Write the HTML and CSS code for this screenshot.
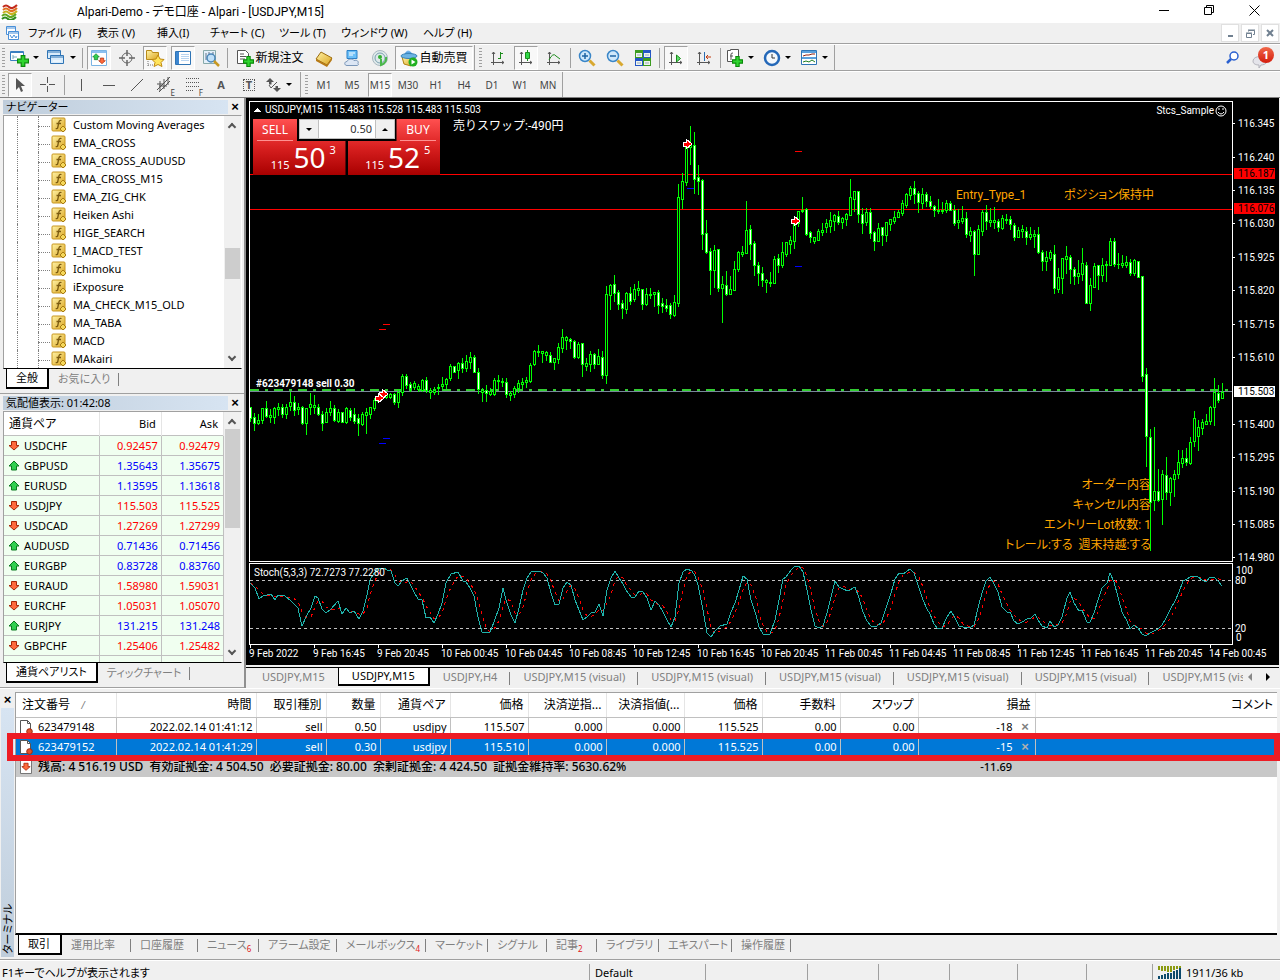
FILE: index.html
```html
<!doctype html>
<html lang="ja">
<head>
	<meta charset="UTF-8">
	<meta name="viewport" content="width=device-width, initial-scale=1">
	<title>Alpari-Demo</title>
	<link rel="stylesheet" href="styles.css">
</head>
<body>
	<svg class="defs" width="0" height="0">
		<defs>
			<linearGradient id="g_gold" x1="0" y1="0" x2="1" y2="1"><stop offset="0" stop-color="#fff3a8"/><stop offset="1" stop-color="#dba520"/></linearGradient>
			<linearGradient id="g_blue" x1="0" y1="0" x2="0" y2="1"><stop offset="0" stop-color="#8cc8f5"/><stop offset="1" stop-color="#1d6fc0"/></linearGradient>
		</defs>
		<symbol id="i_plus" viewBox="0 0 10 10"><path d="M3.500.5h3v3h3v3h-3v3h-3v-3h-3v-3h3z" fill="#2fd52f" stroke="#0a8a0a"/></symbol>
		<symbol id="i_fx" viewBox="0 0 16 16">
			<rect x="1" y="1" width="13" height="13" rx="1" fill="url(#g_gold)" stroke="#c8961e"/>
			<path d="M10.500 3.500c-2-.8-2.500.8-2.800 2.500l-.8 4c-.3 1.500-1 2-2.200 1.500M5.500 6.500h4.500" fill="none" stroke="#7a5a10" stroke-width="1.300"/>
			<path d="M12 9l3 3-3 3-3-3z" fill="#f5d75a" stroke="#a87c12"/>
		</symbol>
		<symbol id="i_up" viewBox="0 0 12 12"><path d="M6 1l5 5H8.500v4h-5V6H1z" fill="#30d050" stroke="#0b7a20"/></symbol>
		<symbol id="i_down" viewBox="0 0 12 12"><path d="M6 10L1 5.500h2.500v-4h5v4H11z" fill="#ff6a3c" stroke="#a82808"/></symbol>
		<symbol id="i_axes" viewBox="0 0 16 16"><path d="M3.500 2v13M1 12.500h13M2 4l1.500-2L5 4M12 11l2 1.500-2 1.500" fill="none" stroke="#555"/></symbol>
		<symbol id="i_order" viewBox="0 0 14 15">
			<path d="M1.500.5h7l3 3v10h-10z" fill="#fff" stroke="#555"/><path d="M8.500.5v3h3" fill="none" stroke="#555"/>
			<circle cx="10.500" cy="11.500" r="2.800" fill="#e2502a" stroke="#9c2a0c"/>
		</symbol>
	</svg>

	<header class="titlebar">
		<svg class="logo" width="18" height="17" fill="none" stroke-width="2">
			<path d="M2 4q3-3 6 0t8-2" stroke="#c22a1c"/><path d="M2 7q3-3 6 0t8-2" stroke="#e07020"/>
			<path d="M2 10q3-3 6 0t8-2" stroke="#c8b020"/><path d="M1 13q3-3 6 0t8-2" stroke="#62a822"/><path d="M1 16q3-3 6 0t8-2" stroke="#2f8a1c"/>
		</svg>
		<h1>Alpari-Demo - デモ口座 - Alpari - [USDJPY,M15]</h1>
		<div class="win-btns">
			<button type="button" aria-label="最小化"><svg width="11" height="11" stroke="#000"><path d="M0 5.500h10"/></svg></button>
			<button type="button" aria-label="元に戻す"><svg width="11" height="11" fill="none" stroke="#000"><path d="M.5 2.500h7v7h-7zM2.500 2.500v-2h7v7h-2"/></svg></button>
			<button type="button" aria-label="閉じる"><svg width="11" height="11" stroke="#000"><path d="M.5.5l10 10M10.500.5l-10 10"/></svg></button>
		</div>
	</header>

	<nav class="menubar">
		<svg width="16" height="14" fill="#fff" stroke="#4a90d8"><path d="M1.500.5h9v8h-9z"/><path d="M1.500 2h9M3.500 5.500h10v8h-10zM3.500 7h10" /><path d="M5 9l2 3 2-3 2 3 1-2" fill="none"/></svg>
		<a href="#">ファイル (F)</a>
		<a href="#">表示 (V)</a>
		<a href="#">挿入(I)</a>
		<a href="#">チャート (C)</a>
		<a href="#">ツール (T)</a>
		<a href="#">ウィンドウ (W)</a>
		<a href="#">ヘルプ (H)</a>
		<div class="mdi-btns">
			<button type="button" aria-label="最小化"><svg width="11" height="11" stroke="#708090" stroke-width="2"><path d="M3 8h5"/></svg></button>
			<button type="button" aria-label="元に戻す"><svg width="11" height="11" fill="none" stroke="#708090"><path d="M1.500 5.500h5v4h-5zM1 5h6M3.500 3.500v-1h6v4H8M3 2h7"/></svg></button>
			<button type="button" aria-label="閉じる"><svg width="11" height="11" stroke="#708090" stroke-width="2"><path d="M2 2l6 6M8 2l-6 6"/></svg></button>
		</div>
	</nav>

	<div class="toolbar">
		<div class="tool-group">
			<button type="button" class="split" aria-label="新規チャート"><svg width="20" height="18"><path d="M1.500 2.500h13v9h-13z" fill="#fff" stroke="#3a80c0"/><path d="M2 3.500h12" stroke="#3a80c0"/><path d="M4 6v4M4 8h4" stroke="#7ab"/><use href="#i_plus" x="8" y="6" width="12" height="12"/></svg></button>
			<button type="button" class="split" aria-label="チャートの組表示"><svg width="20" height="18" fill="#d9ecfb" stroke="#2f74b5"><path d="M1.500 1.500h13v8h-13zM1.500 3h13"/><path d="M4.500 6.500h13v8h-13zM4.500 8h13"/><path d="M7 12h8" stroke="#fff"/></svg></button>
			<span class="sep"></span>
			<button type="button" class="on" aria-label="気配値表示"><svg width="18" height="18"><path d="M1.500 1.500h15v15h-15z" fill="#fff" stroke="#7ab4e4"/><path d="M2 3h14" stroke="#8cc0f0" stroke-width="2"/><use href="#i_up" x="2" y="4" width="8" height="8"/><use href="#i_down" x="8" y="8" width="8" height="8"/></svg></button>
			<button type="button" aria-label="データウィンドウ"><svg width="18" height="18" fill="none" stroke="#666"><circle cx="9" cy="9" r="5"/><path d="M9 1v6M9 11v6M1 9h6M11 9h6" stroke-width="1.500"/></svg></button>
			<button type="button" class="on" aria-label="ナビゲーター"><svg width="20" height="18"><path d="M1.500 1.500h5l1 2h6v7h-12z" fill="url(#g_gold)" stroke="#b98a18"/><path d="M3 12v5M3 16h5" stroke="#777" stroke-dasharray="1 1"/><path d="M13 6l2 4 4 .5-3 3 1 4-4-2-4 2 1-4-3-3 4-.5z" fill="#ffe45c" stroke="#c08a10"/></svg></button>
			<button type="button" class="on" aria-label="ターミナル"><svg width="18" height="18"><path d="M1.500 2.500h15v13h-15z" fill="#fff" stroke="#2f74b5"/><path d="M2 3h3v12H2z" fill="#3c86d0"/><path d="M7 5.500h8M7 7.500h8M7 9.500h8M7 11.500h8" stroke="#b8d4f0"/></svg></button>
			<button type="button" aria-label="ストラテジーテスター"><svg width="18" height="18" fill="none"><path d="M1.500 1.500h12v13h-12z" fill="#e4f0fa" stroke="#8aa"/><path d="M4 4v7M7 3v7M11 3v5" stroke="#678"/><circle cx="9" cy="9" r="4" fill="#bfe0f8" stroke="#4a86b8" stroke-width="1.500"/><path d="M12 12l5 5" stroke="#c89820" stroke-width="2.500"/></svg></button>
			<span class="sep"></span>
			<button type="button" class="wide"><svg width="18" height="18"><path d="M1.500 1.500h8l3 3v10h-11z" fill="#fff" stroke="#555"/><path d="M4 5h4M4 7.500h6M4 10h5" stroke="#555"/><use href="#i_plus" x="7" y="7" width="11" height="11"/></svg>新規注文</button>
			<button type="button" aria-label="MetaEditor"><svg width="18" height="18"><path d="M1 10l5-7 11 6-5 7z" fill="url(#g_gold)" stroke="#9c6c10"/><path d="M1 10v2l11 6 5-7V9l-5 7z" fill="#b87a14"/></svg></button>
			<button type="button" aria-label="VPS"><svg width="18" height="18"><path d="M4 1.500h10v8H4z" fill="#6cc0f8" stroke="#2a80c8"/><path d="M6 4h6M6 6h4" stroke="#fff"/><path d="M4 16.500c-3 0-3-4 0-4 1-3 6-3 7-1 3-1 5 1 4 3 1 1 0 2-1 2z" fill="#dce6f4" stroke="#7a96b8"/></svg></button>
			<button type="button" aria-label="シグナル"><svg width="18" height="18" fill="none"><circle cx="9" cy="9" r="7.500" fill="#dfe9ea" stroke="#a8b8c0"/><circle cx="9" cy="9" r="5" stroke="#7aa0b0"/><path d="M10 10v6q6-2 5-8" stroke="#4ab84a" stroke-width="2"/><circle cx="9" cy="8" r="2" fill="#30b030"/></svg></button>
			<button type="button" class="wide on"><svg width="18" height="18"><path d="M2 8l2 7 7 2 4-8z" fill="url(#g_gold)" stroke="#b08010"/><path d="M4 6q4-9 9 0z" fill="url(#g_blue)"/><ellipse cx="9" cy="7" rx="8" ry="2.500" fill="#6cb4e4" stroke="#3a84b8"/><circle cx="13" cy="13" r="4.500" fill="#20b020"/><path d="M11.500 10.500l4 2.500-4 2.500z" fill="#fff"/></svg>自動売買</button>
		</div>
		<div class="tool-group">
			<button type="button" aria-label="バーチャート"><svg width="16" height="16"><use href="#i_axes"/><path d="M10.500 2v7M8 8.500h2M11 3.500h2" stroke="#1c8c1c"/></svg></button>
			<button type="button" class="on" aria-label="ローソク足"><svg width="16" height="16"><use href="#i_axes"/><path d="M9.500 0v11" stroke="#1c8c1c"/><path d="M7.500 2.500h4v6h-4z" fill="#30d848" stroke="#1c8c1c"/></svg></button>
			<button type="button" aria-label="ラインチャート"><svg width="16" height="16"><use href="#i_axes"/><path d="M3 10q4-8 7-4l4 3" fill="none" stroke="#1c8c1c"/></svg></button>
			<span class="sep"></span>
			<button type="button" aria-label="拡大"><svg width="18" height="18"><circle cx="7" cy="7" r="5.500" fill="#cfe8fb" stroke="#3a86c8" stroke-width="1.500"/><path d="M4 7h6M7 4v6" stroke="#1f64a4" stroke-width="1.500"/><path d="M11.500 11.500l5 5" stroke="#d8a830" stroke-width="3"/></svg></button>
			<button type="button" aria-label="縮小"><svg width="18" height="18"><circle cx="7" cy="7" r="5.500" fill="#cfe8fb" stroke="#3a86c8" stroke-width="1.500"/><path d="M4 7h6" stroke="#1f64a4" stroke-width="1.500"/><path d="M11.500 11.500l5 5" stroke="#d8a830" stroke-width="3"/></svg></button>
			<button type="button" aria-label="整列"><svg width="16" height="16"><path d="M0 0h8v8H0zM8 8h8v8H8z" fill="#3d9c20"/><path d="M8 0h8v8H8zM0 8h8v8H0z" fill="#2456c4"/><path d="M1 3h6v4H1zM9 3h6v4H9zM1 11h6v4H1zM9 11h6v4H9z" fill="#eef4ee"/><path d="M2 5h4M10 5h4M2 13h4M10 13h4" stroke="#9ab"/></svg></button>
			<span class="sep"></span>
			<button type="button" class="on" aria-label="自動スクロール"><svg width="16" height="16"><use href="#i_axes"/><path d="M8.500 5v7l4-3.500z" fill="#60e070" stroke="#1c8c1c"/></svg></button>
			<button type="button" aria-label="チャートシフト"><svg width="16" height="16"><use href="#i_axes"/><path d="M8.500 2v9" stroke="#2a6cb0"/><path d="M15 7h-5M12 5l-2 2 2 2" fill="none" stroke="#c03a10"/></svg></button>
			<span class="sep"></span>
			<button type="button" class="split" aria-label="インディケータ"><svg width="18" height="18"><path d="M1.500 1.500h3v-1h8v12h-11z" fill="#fff" stroke="#555"/><path d="M5 11V5q0-1 2-1M4 7h3" fill="none" stroke="#555"/><use href="#i_plus" x="6" y="7" width="11" height="11"/></svg></button>
			<button type="button" class="split" aria-label="時間足"><svg width="18" height="18"><circle cx="9" cy="9" r="7" fill="#f4f8fc" stroke="#2468b8" stroke-width="2.500"/><path d="M9 5v4h3" fill="none" stroke="#333"/></svg></button>
			<button type="button" class="split" aria-label="定型チャート"><svg width="18" height="18"><path d="M1.500 1.500h15v14h-15z" fill="#fff" stroke="#2f74b5"/><path d="M2 3h14M2 9h14" stroke="#5aa0dc" stroke-width="2"/><path d="M3 7l3-1 3 0 3-1 3 0" fill="none" stroke="#902010"/><path d="M3 13l3-1 3 1 3-2 3 2" fill="none" stroke="#208020"/></svg></button>
		</div>
		<div class="tool-right">
			<button type="button" aria-label="検索"><svg width="16" height="16" fill="none"><circle cx="9" cy="6" r="4" fill="#fff" stroke="#2a60d0" stroke-width="1.500"/><path d="M6 9l-4 4" stroke="#2a60d0" stroke-width="2.500"/></svg></button>
			<button type="button" class="alert" aria-label="通知"><svg width="24" height="22"><path d="M1 14c0-6 14-6 14 0 0 3-4 4-6 4l-2 3v-3c-3 0-6-1-6-4z" fill="#e4e4ea" stroke="#b4b4bc"/></svg><span class="badge">1</span></button>
		</div>
	</div>

	<div class="toolbar lower">
		<div class="tool-group">
			<button type="button" class="on" aria-label="カーソル"><svg width="12" height="16"><path d="M2 1v12l3-3 2 5 2-1-2-5h4z" fill="#555"/></svg></button>
			<button type="button" aria-label="十字"><svg width="16" height="16" stroke="#555"><path d="M7.500 0v6M7.500 9v6M0 7.500h6M9 7.500h6"/></svg></button>
			<span class="sep"></span>
			<button type="button" aria-label="垂直線"><svg width="14" height="14" stroke="#555"><path d="M7.500 1v12"/></svg></button>
			<button type="button" aria-label="水平線"><svg width="14" height="14" stroke="#555"><path d="M1 7.500h12"/></svg></button>
			<button type="button" aria-label="トレンドライン"><svg width="14" height="14" stroke="#555"><path d="M1 13L13 1"/></svg></button>
			<button type="button" aria-label="チャネル"><svg width="18" height="18" fill="none" stroke="#555"><path d="M1 14L14 1M3 16L14 5M1 8h6M4 15V5M8 13V3M12 9V1M3 10h8"/></svg><small>E</small></button>
			<button type="button" aria-label="フィボナッチ"><svg width="18" height="18" stroke="#555" stroke-dasharray="1 1"><path d="M2 2.500h14M2 6.500h14M2 10.500h14M2 14.500h8"/></svg><small>F</small></button>
			<button type="button" class="letter">A</button>
			<button type="button" class="letter boxed">T</button>
			<button type="button" class="split" aria-label="矢印"><svg width="16" height="14" fill="#555"><path d="M4 0l4 4-2.500 0v2.500H3V4H0zM11 14l-4-4h2.500V8H12v2h3z"/><path d="M3 7l2 3 6-6" fill="none" stroke="#555"/></svg></button>
		</div>
		<div class="tool-group periods">
			<button type="button">M1</button>
			<button type="button">M5</button>
			<button type="button" class="on">M15</button>
			<button type="button">M30</button>
			<button type="button">H1</button>
			<button type="button">H4</button>
			<button type="button">D1</button>
			<button type="button">W1</button>
			<button type="button">MN</button>
		</div>
	</div>

	<main class="workspace">
		<aside class="side">
			<section class="panel navigator">
				<h2><span>ナビゲーター</span><button type="button" aria-label="閉じる"></button></h2>
				<div class="panel-body">
					<ul class="tree" id="tree"></ul>
					<div class="scrollbar"><i></i><b></b></div>
				</div>
				<div class="tabs">
					<button type="button" class="active">全般</button>
					<button type="button">お気に入り</button>
				</div>
			</section>
			<section class="panel market">
				<h2><span>気配値表示: 01:42:08</span><button type="button" aria-label="閉じる"></button></h2>
				<div class="panel-body">
					<table class="quotes">
						<thead><tr><th>通貨ペア</th><th>Bid</th><th>Ask</th></tr></thead>
						<tbody id="quotes"></tbody>
					</table>
					<div class="scrollbar"><i></i><b></b></div>
				</div>
				<div class="tabs">
					<button type="button" class="active">通貨ペアリスト</button>
					<button type="button">ティックチャート</button>
				</div>
			</section>
		</aside>

		<section class="chart-area">
			<div class="chart">
				<div class="price-row">
					<svg class="plot" id="plot"></svg>
					<svg class="scale" id="price_scale"></svg>
				</div>
				<div class="stoch-row">
					<svg class="plot" id="stoch"></svg>
					<svg class="scale" id="stoch_scale"></svg>
				</div>
				<svg class="time-scale" id="time_scale"></svg>

				<div class="ticket">
					<button type="button" class="sell"><span class="side-name">SELL</span><span class="price"><small>115</small><big>50</big><sup>3</sup></span></button>
					<button type="button" class="buy"><span class="side-name">BUY</span><span class="price"><small>115</small><big>52</big><sup>5</sup></span></button>
					<div class="volume">
						<button type="button" class="dec" aria-label="減らす"></button>
						<input type="text" value="0.50" aria-label="数量">
						<button type="button" class="inc" aria-label="増やす"></button>
					</div>
				</div>
			</div>
			<div class="tabs chart-tabs">
				<div class="tab-strip">
					<button type="button" class="plain">USDJPY,M15</button>
					<button type="button" class="active">USDJPY,M15</button>
					<button type="button">USDJPY,H4</button>
					<button type="button">USDJPY,M15 (visual)</button>
					<button type="button">USDJPY,M15 (visual)</button>
					<button type="button">USDJPY,M15 (visual)</button>
					<button type="button">USDJPY,M15 (visual)</button>
					<button type="button">USDJPY,M15 (visual)</button>
					<button type="button">USDJPY,M15 (visual)</button>
				</div>
				<div class="tab-arrows">
					<button type="button" aria-label="前へ"><svg width="5" height="8"><path d="M4 0v8L0 4z" fill="#888"/></svg></button>
					<button type="button" aria-label="次へ"><svg width="5" height="8"><path d="M0 0v8l4-4z"/></svg></button>
				</div>
			</div>
		</section>
	</main>

	<section class="terminal">
		<div class="terminal-title">
			<button type="button" class="close" aria-label="閉じる"></button>
			<h2>ターミナル</h2>
		</div>
		<div class="terminal-main">
			<div class="terminal-body">
				<table class="orders">
					<colgroup>
						<col class="w100"><col class="w140"><col class="w70"><col class="w54"><col class="w70"><col class="w78"><col class="w78">
						<col class="w78"><col class="w78"><col class="w78"><col class="w78"><col class="w117"><col>
					</colgroup>
					<thead>
						<tr>
							<th class="first">注文番号 <i>/</i></th><th>時間</th><th>取引種別</th><th>数量</th><th>通貨ペア</th><th>価格</th><th>決済逆指...</th>
							<th>決済指値(...</th><th>価格</th><th>手数料</th><th>スワップ</th><th>損益</th><th>コメント</th>
						</tr>
					</thead>
					<tbody>
						<tr>
							<td class="first"><svg width="14" height="15"><use href="#i_order"/></svg>623479148</td><td>2022.02.14 01:41:12</td><td>sell</td><td>0.50</td><td>usdjpy</td><td>115.507</td><td>0.000</td>
							<td>0.000</td><td>115.525</td><td>0.00</td><td>0.00</td><td>-18<button type="button" class="close" aria-label="決済"></button></td><td></td>
						</tr>
						<tr class="selected">
							<td class="first"><svg width="14" height="15"><use href="#i_order"/></svg>623479152</td><td>2022.02.14 01:41:29</td><td>sell</td><td>0.30</td><td>usdjpy</td><td>115.510</td><td>0.000</td>
							<td>0.000</td><td>115.525</td><td>0.00</td><td>0.00</td><td>-15<button type="button" class="close" aria-label="決済"></button></td><td></td>
						</tr>
						<tr class="total">
							<td class="first" colspan="11"><svg width="14" height="15"><path d="M1.500.5h11v13h-11z" fill="#fff" stroke="#777"/><use href="#i_down" x="2" y="2" width="10" height="10"/></svg>残高: 4 516.19 USD&nbsp; 有効証拠金: 4 504.50&nbsp; 必要証拠金: 80.00&nbsp; 余剰証拠金: 4 424.50&nbsp; 証拠金維持率: 5630.62%</td>
							<td>-11.69</td><td></td>
						</tr>
					</tbody>
				</table>
			</div>
			<div class="tabs terminal-tabs">
				<button type="button" class="active">取引</button>
				<button type="button">運用比率</button>
				<button type="button">口座履歴</button>
				<button type="button">ニュース<sub>6</sub></button>
				<button type="button">アラーム設定</button>
				<button type="button">メールボックス<sub>4</sub></button>
				<button type="button">マーケット</button>
				<button type="button">シグナル</button>
				<button type="button">記事<sub>2</sub></button>
				<button type="button">ライブラリ</button>
				<button type="button">エキスパート</button>
				<button type="button">操作履歴</button>
			</div>
		</div>
		<div class="highlight"></div>
	</section>

	<footer class="statusbar">
		<span>F1キーでヘルプが表示されます</span>
		<span>Default</span>
		<span></span><span></span><span></span><span></span><span></span><span></span>
		<span class="traffic"><svg width="25" height="15" stroke-width="2"><path d="M2 2v4M5 2v5M8 2v5M11 2v6M14 2v6M17 2v4M20 2v3M23 2v2" stroke="#8a9a10"/><path d="M2 12v3M5 11v4M8 10v5M11 9v6M14 9v6M17 7v8M20 6v9M23 4v11" stroke="#0c4a6c"/></svg>1911/36 kb</span>
	</footer>

	<script src="script.js"></script>
</body>
</html>
```
FILE: styles.css
```css
*{
	margin:0;
	padding:0;
	box-sizing:border-box;
}
html, body{
	height:100%;
}
body{
	display:flex;
	flex-direction:column;
	overflow:hidden;
	background:#f0f0f0;
	color:#000;
	font-family:"Noto Sans", "Noto Sans CJK JP", sans-serif;
	font-size:11px;
	font-feature-settings:"palt";
	line-height:16px;
}
button, input{
	font:inherit;
	font-feature-settings:inherit;
	color:inherit;
	background:none;
	border:0;
}
a{
	color:inherit;
	text-decoration:none;
}
svg{
	display:block;
	flex:none;
}
table{
	border-collapse:collapse;
	table-layout:fixed;
}
.defs{
	position:absolute;
}

/* title and menu */
.titlebar{
	flex:none;
	display:flex;
	align-items:center;
	height:23px;
	background:#fff;
}
.titlebar .logo{
	margin:0 58px 0 1px;
}
.titlebar h1{
	flex:1;
	font-family:Roboto, "Noto Sans CJK JP", sans-serif;
	font-size:12px;
	font-weight:normal;
}
.win-btns{
	display:flex;
	align-self:flex-start;
	padding-right:3px;
}
.win-btns button{
	width:45px;
	height:20px;
	display:grid;
	place-items:center;
}
.menubar{
	flex:none;
	display:grid;
	grid-template-columns:23px 69px 60px 53px 69px 62px 82px 60px 1fr;
	align-items:center;
	height:21px;
	padding-left:5px;
	border-bottom:1px solid #a0a0a0;
	white-space:nowrap;
}
.mdi-btns{
	justify-self:end;
	display:flex;
	gap:2px;
	padding-right:1px;
}
.mdi-btns button{
	width:18px;
	height:18px;
	display:grid;
	place-items:center;
	background:#fff;
	border:1px solid #e0e0e0;
}

/* toolbars */
.toolbar{
	flex:none;
	display:flex;
	height:27px;
	border-top:1px solid #fff;
	border-bottom:1px solid #a0a0a0;
}
.toolbar.lower{
	border-bottom-color:#808080;
}
.tool-group{
	display:flex;
	align-items:center;
	padding-left:6px;
	border-right:1px solid #a0a0a0;
	background:repeating-linear-gradient(#a0a0a0 0 1px, transparent 1px 3px) 2px 3px / 3px 19px no-repeat;
}
.tool-group + .tool-group{
	padding-left:9px;
	background-position:4px 3px;
}
.tool-group button{
	position:relative;
	display:flex;
	align-items:center;
	justify-content:center;
	width:24px;
	height:24px;
	margin:0 2px;
}
.tool-group .on{
	background:#f8f8f8;
	border:1px solid #fff;
	border-top-color:#a0a0a0;
	border-left-color:#a0a0a0;
}
.tool-group .split{
	width:37px;
	margin:0;
	padding-left:3px;
	justify-content:flex-start;
	gap:4px;
}
.split::after{
	content:"";
	border:3px solid transparent;
	border-top-color:#000;
	border-bottom:0;
}
.tool-group .wide{
	width:78px;
	margin:0 1px;
	gap:1px;
	font-size:12px;
	white-space:nowrap;
}
.sep{
	width:1px;
	height:20px;
	margin:0 2px;
	background:#a0a0a0;
}
.tool-group small{
	position:absolute;
	right:1px;
	bottom:0;
	padding:0 1px;
	background:#f0f0f0;
	color:#444;
	font-size:8px;
	line-height:8px;
}
.tool-group .letter{
	color:#555;
	font-weight:bold;
}
.letter.boxed::before{
	content:"";
	position:absolute;
	inset:6px;
	border:1px dotted #555;
}
.periods button{
	color:#444;
	font-size:10px;
}
.tool-right{
	display:flex;
	margin-left:auto;
	padding-right:2px;
}
.tool-right button{
	width:26px;
}
.tool-right button:first-child{
	padding-left:3px;
}
.alert{
	position:relative;
	margin-left:4px;
}
.badge{
	position:absolute;
	top:2px;
	left:6px;
	width:16px;
	height:16px;
	border-radius:50%;
	background:linear-gradient(#f0684a, #d41c0c);
	color:#fff;
	font-weight:bold;
	text-align:center;
}

/* left column */
.workspace{
	flex:590 1 0;
	min-height:0;
	display:flex;
}
.side{
	width:246px;
	display:flex;
	flex-direction:column;
	border-right:2px solid #909090;
}
.panel{
	min-height:0;
	display:flex;
	flex-direction:column;
	padding:2px 2px 0 3px;
	border-bottom:1px solid #a0a0a0;
}
.navigator{
	flex:296 1 0;
}
.market{
	flex:294 1 0;
}
.panel h2{
	display:flex;
	height:14px;
	margin-bottom:1px;
	font-size:11px;
	line-height:14px;
	font-weight:normal;
}
.panel h2 span{
	flex:1;
	padding-left:3px;
	background:linear-gradient(90deg, #bfcddb, #d7e4f2);
}
.panel h2 button{
	width:14px;
}
.panel h2 button::before, .close::before{
	content:"×";
	font:bold 13px/13px "Liberation Sans", sans-serif;
}
.panel-body{
	flex:1;
	min-height:0;
	display:flex;
	overflow:hidden;
	background:#fff;
	border:1px solid #a0a0a0;
	border-right-color:#fff;
	border-bottom:1px solid #000;
}
.tree{
	flex:1;
	list-style:none;
	padding-left:13px;
}
.tree li{
	display:flex;
	align-items:center;
	height:18px;
	border-left:1px dotted #808080;
}
.tree li::before{
	content:"";
	align-self:flex-start;
	width:12px;
	height:10px;
	margin-left:20px;
	border-bottom:1px dotted #808080;
}
.tree li::after{
	content:"";
	order:-1;
	height:18px;
	margin-left:20px;
	margin-right:-21px;
	border-left:1px dotted #808080;
}
.tree svg{
	margin:0 6px 0 1px;
}
.scrollbar{
	width:17px;
	display:flex;
	flex-direction:column;
	justify-content:space-between;
	background:linear-gradient(#cdcdcd, #cdcdcd) 1px 132px / 15px 31px no-repeat #f0f0f0;
}
.market .scrollbar{
	background-position:1px 17px;
	background-size:15px 99px;
}
.scrollbar i, .scrollbar b{
	width:6px;
	height:6px;
	margin:8px 5px;
	border:solid #555;
	border-width:2px 0 0 2px;
	transform:rotate(45deg);
}
.scrollbar b{
	transform:rotate(225deg);
}
.quotes{
	flex:1;
	align-self:flex-start;
}
.quotes th{
	height:24px;
	padding:0 5px;
	border-right:1px solid #e5e5e5;
	font-weight:normal;
	text-align:right;
}
.quotes th:first-child{
	width:95px;
	text-align:left;
	font-size:12px;
}
.quotes td{
	height:20px;
	padding:0 3px;
	background:#f0fff0;
	border:solid #c0c0c0;
	border-width:1px 1px 1px 0;
	text-align:right;
	color:#f00;
}
.quotes .up td{
	color:#00f;
}
.quotes tr td:first-child{
	color:#000;
	text-align:left;
}
.quotes svg{
	float:left;
	margin:2px 4px 0 1px;
}

/* tabs */
.tabs{
	flex:none;
	display:flex;
	align-items:flex-start;
	height:24px;
	padding-left:3px;
	color:#808080;
	white-space:nowrap;
}
.tabs button{
	flex:none;
	position:relative;
	height:20px;
	padding:0 9px;
}
.tabs button::after{
	content:"";
	position:absolute;
	right:0;
	top:4px;
	height:13px;
	border-right:1px solid #808080;
}
.tabs .active{
	background:#fff;
	color:#000;
	border:solid #000;
	border-width:0 2px 2px 1px;
}
.tabs .active::after, .tabs .plain::after{
	display:none;
}
.tabs sub{
	color:#e02020;
	font-size:8px;
	line-height:8px;
}

/* chart */
.chart-area{
	flex:1;
	min-width:0;
	display:flex;
	flex-direction:column;
	padding-right:1px;
}
.chart{
	flex:1;
	min-height:0;
	position:relative;
	display:flex;
	flex-direction:column;
	padding:3px 0 0 3px;
	background:#000;
	color:#fff;
	font-family:Roboto, "Noto Sans CJK JP", sans-serif;
	font-size:10px;
}
.chart text{
	fill:#fff;
}
.price-row, .stoch-row{
	display:flex;
}
.price-row{
	flex:1;
	min-height:0;
	margin-bottom:1px;
}
.stoch-row{
	height:82px;
}
.plot{
	flex:1;
	min-width:0;
	height:100%;
	border:1px solid #fff;
	shape-rendering:crispEdges;
}
.scale{
	width:46px;
	height:100%;
}
.time-scale{
	width:100%;
	height:20px;
}
.chart .tag-dark{
	fill:#000;
}
.chart .note{
	fill:#ffa500;
	font-size:12px;
}
.chart .swap{
	font-size:12px;
	font-feature-settings:normal;
}
.chart .order-line{
	font-weight:bold;
}

/* one click trading */
.ticket{
	position:absolute;
	top:21px;
	left:7px;
	width:187px;
	height:56px;
	display:flex;
	gap:2px;
	background:#000;
	font-family:"Noto Sans", sans-serif;
}
.ticket .sell, .ticket .buy{
	flex:1;
	display:flex;
	flex-direction:column;
	justify-content:space-between;
	background:linear-gradient(#ff5050, #d92020 50%, #a80000);
	clip-path:polygon(0 0, 44px 0, 44px 22px, 100% 22px, 100% 100%, 0 100%);
}
.ticket .buy{
	clip-path:polygon(49px 0, 100% 0, 100% 100%, 0 100%, 0 22px, 49px 22px);
	align-items:flex-end;
}
.side-name{
	width:36px;
	height:22px;
	margin:0 4px;
	border-bottom:1px solid #ff9090;
	font-size:12px;
	line-height:21px;
	text-align:center;
}
.price{
	width:100%;
	display:flex;
	align-items:flex-end;
	justify-content:center;
	gap:4px;
	height:33px;
	padding-left:8px;
}
.price small{
	font-size:11px;
	line-height:21px;
}
.price big{
	font-size:28px;
	line-height:35px;
}
.price sup{
	align-self:flex-start;
	font-size:11px;
	line-height:16px;
}
.volume{
	position:absolute;
	left:46px;
	top:0;
	width:96px;
	height:20px;
	display:flex;
	border:1px solid #c0c0c0;
	background:#fff;
	color:#333;
}
.volume input{
	flex:1;
	min-width:0;
	padding-right:3px;
	font-size:11px;
	text-align:right;
}
.volume button{
	width:19px;
	display:grid;
	place-items:center;
	background:#f0f0f0;
	border-right:1px solid #c0c0c0;
}
.volume .inc{
	border-right:0;
	border-left:1px solid #c0c0c0;
}
.volume button::before{
	content:"";
	border:3px solid transparent;
	border-top-color:#000;
	border-bottom:0;
}
.volume .inc::before{
	border:3px solid transparent;
	border-bottom-color:#000;
	border-top:0;
}
.chart-tabs{
	height:21px;
	margin-top:2px;
	border-top:1px solid #000;
}
.tab-strip{
	flex:1;
	min-width:0;
	display:flex;
	overflow:hidden;
}
.chart-tabs button{
	height:18px;
	padding:0 13px;
}
.tab-arrows{
	display:flex;
}
.tab-arrows button{
	width:18px;
	padding:0 5px;
}
.tab-arrows button::after{
	display:none;
}

/* terminal */
.terminal{
	flex:265 1 0;
	min-height:0;
	position:relative;
	display:flex;
	padding:3px 3px 2px 0;
	border-top:1px solid #fff;
	border-bottom:1px solid #a0a0a0;
}
.terminal-title{
	width:15px;
	display:flex;
	flex-direction:column;
}
.terminal-title h2{
	flex:1;
	width:13px;
	margin-left:1px;
	padding-top:3px;
	background:linear-gradient(#bfcddb, #d7e4f2);
	font-size:11px;
	line-height:13px;
	font-weight:normal;
	writing-mode:vertical-rl;
	text-orientation:sideways;
	transform:rotate(180deg);
}
.terminal-main{
	flex:1;
	min-width:0;
	display:flex;
	flex-direction:column;
}
.terminal-body{
	flex:1;
	min-height:0;
	background:#fff;
	border:1px solid #a0a0a0;
	border-right:0;
	border-bottom:2px solid #000;
}
.orders{
	width:100%;
}
.w54{ width:54px; }
.w70{ width:70px; }
.w78{ width:78px; }
.w100{ width:100px; }
.w117{ width:117px; }
.w140{ width:140px; }
.orders th{
	height:24px;
	padding:0 4px;
	border-right:1px solid #e5e5e5;
	border-bottom:1px solid #c0c0c0;
	font-size:12px;
	font-weight:normal;
	text-align:right;
	white-space:nowrap;
}
.orders td{
	height:20px;
	padding:0 3px;
	border-right:1px solid #c0c0c0;
	text-align:right;
	white-space:nowrap;
}
.orders .first{
	text-align:left;
}
.orders th.first{
	padding-left:6px;
}
.orders th.first i{
	margin-left:8px;
	color:#808080;
	font-size:10px;
}
.orders td.first svg{
	float:left;
	margin:1px 5px 0 0;
}
.orders th:last-child, .orders td:last-child{
	border-right:0;
}
.orders .selected{
	background:#0078d7;
	color:#fff;
}
.orders .total td{
	border:0;
	background:#c8c8c8;
	font-weight:500;
}
.orders .total .first{
	font-size:12px;
}
.orders .total td:nth-child(2){
	padding-right:23px;
}
.orders .close{
	width:13px;
	margin-left:6px;
	color:#808080;
}
.orders .selected .close{
	color:#b0b0b0;
}
.terminal-tabs{
	height:22px;
	display:grid;
	grid-template-columns:44px 69px 67px 61px 78px 89px 62px 59px 50px 62px 73px 59px;
}
.terminal-tabs button{
	text-align:left;
}
.highlight{
	position:absolute;
	top:44px;
	left:7px;
	right:0;
	height:28px;
	border:6px solid #ed1c24;
}

.statusbar{
	flex:none;
	display:grid;
	grid-template-columns:1fr 116px 102px 71px 71px 68px 69px 66px 128px;
	height:20px;
	padding-top:3px;
	border-top:1px solid #fff;
}
.statusbar span{
	padding-left:5px;
	border-left:1px solid #a0a0a0;
	line-height:18px;
	white-space:nowrap;
}
.statusbar span:first-child{
	padding-left:2px;
	border:0;
}
.statusbar .traffic{
	display:flex;
	gap:4px;
	padding-left:4px;
}
```
FILE: script.js
```js
const NS = 'http://www.w3.org/2000/svg';

let add = (id, name, attrs, text) => {
	let el = document.createElementNS(NS, name);
	for (let k in attrs) el.setAttribute(k, attrs[k]);
	if (text !== undefined) el.textContent = text;
	document.getElementById(id).appendChild(el);
	return el;
};

// navigator tree
const INDICATORS = ['Custom Moving Averages', 'EMA_CROSS', 'EMA_CROSS_AUDUSD', 'EMA_CROSS_M15', 'EMA_ZIG_CHK', 'Heiken Ashi',
	'HIGE_SEARCH', 'I_MACD_TEST', 'Ichimoku', 'iExposure', 'MA_CHECK_M15_OLD', 'MA_TABA', 'MACD', 'MAkairi'];
document.getElementById('tree').innerHTML = INDICATORS.map(name =>
	`<li><svg width="16" height="16"><use href="#i_fx"/></svg>${name}</li>`).join('');

// market watch
const QUOTES = [
	['USDCHF', '0.92457', '0.92479', 0], ['GBPUSD', '1.35643', '1.35675', 1], ['EURUSD', '1.13595', '1.13618', 1],
	['USDJPY', '115.503', '115.525', 0], ['USDCAD', '1.27269', '1.27299', 0], ['AUDUSD', '0.71436', '0.71456', 1],
	['EURGBP', '0.83728', '0.83760', 1], ['EURAUD', '1.58980', '1.59031', 0], ['EURCHF', '1.05031', '1.05070', 0],
	['EURJPY', '131.215', '131.248', 1], ['GBPCHF', '1.25406', '1.25482', 0]
];
document.getElementById('quotes').innerHTML = QUOTES.map(q =>
	`<tr class="${q[3] ? 'up' : 'down'}"><td><svg width="12" height="12"><use href="#i_${q[3] ? 'up' : 'down'}"/></svg>${q[0]}</td><td>${q[1]}</td><td>${q[2]}</td></tr>`
).join('') + '<tr><td></td><td></td><td></td></tr>';

// bars: high, body top, body bottom, low, 1 = down bar. Three units per pixel.
const BARS = [
	[935,935,970,978,1],[955,967,983,1005,1],[958,975,984,988,0],[940,940,975,984,0],[918,938,962,965,1],[942,960,966,980,0],
	[936,940,966,984,0],[925,937,942,960,0],[927,937,957,966,1],[926,936,957,970,0],[890,920,932,945,0],[902,920,944,960,1],
	[925,936,942,956,0],[932,937,984,987,1],[938,940,984,1017,0],[893,927,937,958,0],[900,930,935,955,0],[928,937,956,960,1],
	[948,958,983,1004,1],[938,950,980,980,0],[918,938,950,960,0],[930,940,974,978,1],[942,950,978,982,0],[950,952,980,980,1],
	[935,938,980,985,0],[940,946,966,975,1],[940,958,977,985,1],[958,970,985,1019,1],[950,957,987,990,0],[940,950,960,1013,0],
	[935,937,956,970,0],[908,915,938,945,0],[903,905,918,922,0],[892,895,905,908,0],[890,895,905,908,0],[895,897,906,910,0],
	[895,898,920,927,1],[882,890,922,936,0],[838,843,890,900,0],[838,843,870,880,1],[862,868,880,888,1],[858,865,875,882,0],
	[866,873,883,887,0],[853,856,884,888,0],[846,856,885,890,1],[880,885,890,910,0],[876,884,892,898,0],[866,876,879,896,0],
	[847,866,873,880,0],[848,852,868,880,0],[806,813,850,855,0],[812,813,830,832,1],[800,803,826,848,0],[790,803,820,830,1],
	[780,798,820,828,0],[772,787,800,818,0],[780,787,830,832,1],[818,832,883,895,1],[880,884,890,918,0],[870,886,895,918,1],
	[880,888,898,900,0],[850,856,898,900,0],[840,854,858,880,0],[850,858,860,873,0],[850,860,897,905,1],[888,895,900,915,0],
	[872,878,898,907,0],[856,864,880,890,0],[850,862,866,880,0],[845,856,862,875,0],[803,810,858,860,0],[765,768,808,810,0],
	[750,768,772,782,0],[768,768,775,800,0],[768,772,780,795,0],[770,780,800,802,1],[788,790,800,822,0],[745,756,793,805,0],
	[702,727,760,770,0],[723,727,735,763,0],[728,733,738,760,1],[735,738,785,790,1],[742,747,785,790,0],[743,745,808,842,1],
	[788,805,812,825,0],[768,778,808,828,0],[774,777,806,818,1],[762,783,806,808,0],[768,786,839,848,1],[573,598,839,863,0],
	[567,570,599,641,0],[540,568,593,617,1],[585,591,626,641,1],[615,625,638,668,1],[591,594,641,653,0],[576,594,617,626,1],
	[567,582,611,617,0],[558,579,584,600,0],[582,582,626,641,1],[579,598,626,630,0],[579,598,599,609,0],[591,592,598,632,0],
	[585,591,629,653,1],[609,624,632,651,1],[612,630,638,647,1],[625,630,656,668,1],[600,621,659,662,0],[267,307,623,632,0],
	[234,258,311,338,0],[132,150,261,270,0],[93,150,155,207,0],[111,150,251,293,1],[210,246,257,296,1],[252,255,416,461,1],
	[375,414,470,473,1],[459,468,524,597,1],[450,465,524,575,0],[462,462,578,587,1],[543,567,578,681,0],[528,570,597,600,1],
	[543,582,596,597,0],[498,522,584,585,0],[468,471,521,527,0],[453,471,476,482,0],[318,405,473,474,0],[390,402,446,491,1],
	[438,444,509,540,1],[501,510,533,570,1],[516,534,554,572,1],[552,555,560,590,0],[531,561,563,572,0],[483,492,563,564,0],
	[477,489,509,530,1],[441,471,509,515,0],[441,441,476,482,0],[423,435,446,473,0],[370,384,437,458,0],[348,348,384,392,0],
	[306,344,348,350,0],[339,342,416,419,1],[408,411,426,440,1],[426,426,438,443,0],[402,408,434,435,0],[384,405,410,419,0],
	[372,384,395,410,0],[351,375,392,410,0],[357,360,377,404,0],[348,363,380,386,1],[366,369,380,398,0],[354,357,371,389,0],
	[252,306,359,360,0],[288,288,311,347,0],[288,288,356,380,1],[339,357,383,413,1],[339,351,380,389,0],[339,351,413,428,1],
	[408,411,437,464,1],[384,399,437,438,0],[396,396,419,449,1],[381,381,419,437,0],[372,372,386,404,0],[348,366,377,383,0],
	[345,350,365,366,0],[315,324,353,359,0],[294,297,329,335,0],[273,279,299,311,0],[258,279,296,323,1],[288,294,320,350,1],
	[279,297,323,338,0],[291,297,317,332,1],[303,318,332,338,1],[331,332,346,362,1],[312,345,347,353,0],[320,345,347,354,0],
	[315,324,346,352,0],[318,324,344,346,1],[330,345,383,389,1],[342,375,380,398,0],[333,369,377,383,0],[351,369,416,425,1],
	[396,408,419,437,0],[405,408,476,540,1],[390,402,476,477,0],[345,351,407,419,0],[330,351,377,401,1],[340,374,380,392,0],
	[336,374,380,398,0],[372,378,395,407,1],[360,369,398,401,0],[357,372,374,383,0],[363,372,388,401,1],[384,390,425,434,1],
	[396,405,425,426,0],[390,402,408,425,0],[396,408,425,446,1],[396,417,425,431,0],[405,417,422,455,0],[396,417,470,473,1],
	[465,471,497,524,1],[468,486,497,524,0],[465,471,488,494,0],[450,477,578,593,1],[519,546,581,590,0],[489,489,548,593,0],
	[453,483,493,533,0],[480,486,521,563,1],[516,522,542,566,1],[495,534,542,563,0],[459,504,536,554,0],[501,510,623,624,1],
	[549,570,623,644,0],[504,513,575,576,0],[510,510,539,581,1],[489,510,539,557,0],[498,507,511,557,0],[429,438,509,510,0],
	[429,438,506,512,1],[474,506,508,518,0],[480,505,511,515,0],[483,501,511,515,0],[492,501,533,540,1],[492,495,533,539,0],
	[498,498,545,546,1],[543,543,842,857,1],[819,837,1022,1112,1],[1002,1027,1220,1365,1],[997,1189,1216,1245,0],[1122,1189,1216,1218,1],
	[1124,1138,1212,1287,0],[1086,1141,1190,1212,1],[1146,1150,1190,1230,0],[1125,1138,1153,1203,0],[1065,1101,1136,1148,0],[1065,1090,1103,1117,0],
	[1059,1090,1100,1110,1],[1026,1042,1103,1106,0],[948,970,1039,1052,0],[975,996,1024,1064,0],[972,982,998,1017,0],[957,978,986,988,0],
	[933,937,979,986,0],[849,890,937,989,0],[870,893,914,922,1],[864,890,908,910,0]
];

// levels
let hline = (y, color) => add('plot', 'rect', {x: 0, y: y, width: '100%', height: 1, fill: color});
hline(72, '#f00');
hline(107, '#f00');
hline(289, '#778899');
add('plot', 'line', {x1: 0, x2: '100%', y1: 288, y2: 288, stroke: '#32cd32', 'stroke-width': 2, 'stroke-dasharray': '9 6 3 6'});

// labels
add('plot', 'path', {d: 'M3 10l4-4 4 4z', fill: '#fff'});
add('plot', 'text', {x: 15, y: 11}, 'USDJPY,M15');
add('plot', 'text', {x: 78, y: 11}, '115.483 115.528 115.483 115.503');
add('plot', 'text', {x: 203, y: 28, class: 'swap'}, '売りスワップ:-490円');
add('plot', 'text', {x: 6, y: 285, class: 'order-line'}, '#623479148 sell 0.30');
add('plot', 'text', {x: 964, y: 12, 'text-anchor': 'end'}, 'Stcs_Sample');
add('plot', 'circle', {cx: 971, cy: 9, r: 5, fill: 'none', stroke: '#fff', 'shape-rendering': 'auto'});
add('plot', 'path', {d: 'M968 10q3 4 6 0M969 6v2M973 6v2', fill: 'none', stroke: '#fff', 'shape-rendering': 'auto'});
add('plot', 'text', {x: 706, y: 97, class: 'note'}, 'Entry_Type_1');
add('plot', 'text', {x: 814, y: 97, class: 'note'}, 'ポジション保持中');
['オーダー内容', 'キャンセル内容', 'エントリーLot枚数: 1', 'トレール:する\u00a0\u00a0週末持越:する'].forEach((t, i) =>
	add('plot', 'text', {x: 901, y: 387 + i * 20, class: 'note', 'text-anchor': 'end'}, t));

BARS.forEach((b, i) => {
	let [high, top, bottom, low] = b.slice(0, 4).map(v => Math.round(v / 3) - 7);
	let x = i * 4;
	add('plot', 'rect', {x: x, y: high, width: 1, height: low - high + 1, fill: '#0f0'});
	add('plot', 'rect', {x: x - 1, y: top, width: 3, height: bottom - top + 1, fill: '#0f0'});
	if (bottom - top > 1) {
		add('plot', 'rect', {x: x, y: top + 1, width: 1, height: bottom - top - 1, fill: b[4] ? '#fff' : '#000'});
	}
});

// entries with their stop and target
[[133, 292], [129, 296], [437, 42], [545, 119]].forEach(p =>
	add('plot', 'path', {d: `M${p[0] - 4} ${p[1] - 2}h3v-3l6 5-6 5v-3h-3z`, fill: '#f00', stroke: '#fff'}));
[[133, 222, '#f00'], [129, 227, '#f00'], [133, 336, '#00f'], [129, 341, '#00f'], [437, 86, '#00f'], [545, 49, '#f00'], [545, 164, '#00f']].forEach(m =>
	add('plot', 'rect', {x: m[0], y: m[1], width: 7, height: 1, fill: m[2]}));

// price scale
[[22, '116.345'], [56, '116.240'], [89, '116.135'], [122, '116.030'], [156, '115.925'], [189, '115.820'], [223, '115.715'],
	[256, '115.610'], [323, '115.400'], [356, '115.295'], [390, '115.190'], [423, '115.085'], [456, '114.980']].forEach(p => {
	add('price_scale', 'rect', {x: 0, y: p[0], width: 2, height: 1, fill: '#fff'});
	add('price_scale', 'text', {x: 5, y: p[0] + 4}, p[1]);
});
[[73, '116.187', '#f00'], [108, '116.076', '#f00'], [291, '115.503', '#fff']].forEach(p => {
	add('price_scale', 'rect', {x: 1, y: p[0] - 6, width: 41, height: 11, fill: p[2]});
	add('price_scale', 'text', {x: 5, y: p[0] + 3, class: 'tag-dark'}, p[1]);
});

// stochastic
const MAIN = [
	[0,19],[5,24],[9,35],[13,32],[21,30],[25,36],[28,31],[34,31],[41,37],[48,44],[52,62],[56,53],[61,44],[65,32],[68,34],[72,45],[76,49],
	[81,45],[88,37],[92,50],[96,44],[100,49],[104,47],[109,55],[113,47],[117,31],[120,16],[124,9],[128,4],[134,4],[137,6],[141,7],[145,19],
	[148,22],[152,17],[157,14],[160,20],[164,28],[168,35],[172,36],[176,54],[180,53],[184,59],[188,50],[192,39],[196,19],[201,10],[208,8],
	[213,17],[216,18],[220,24],[224,32],[228,53],[232,68],[236,69],[240,68],[244,58],[249,44],[253,24],[256,36],[261,51],[265,59],[269,44],
	[273,26],[277,14],[281,8],[285,7],[289,7],[293,9],[297,14],[301,29],[305,41],[309,40],[313,24],[317,18],[321,21],[325,36],[329,46],
	[333,56],[337,53],[341,49],[345,48],[349,40],[353,52],[357,26],[361,14],[365,7],[369,14],[373,20],[376,26],[381,33],[385,33],[389,27],
	[393,28],[397,34],[401,46],[405,37],[409,41],[413,48],[417,56],[421,63],[425,53],[429,19],[433,8],[437,5],[442,7],[445,12],[448,21],
	[453,46],[457,69],[461,73],[465,67],[470,62],[477,60],[481,48],[485,39],[489,26],[493,12],[497,15],[501,36],[506,51],[509,63],[513,70],
	[517,71],[520,70],[525,56],[529,36],[533,15],[536,13],[541,6],[545,2],[549,2],[553,8],[557,26],[561,46],[565,62],[569,64],[573,62],
	[577,49],[581,33],[585,17],[589,23],[593,25],[598,27],[605,23],[609,34],[613,48],[617,57],[621,62],[627,62],[631,59],[636,44],[641,29],
	[645,15],[649,9],[653,10],[660,5],[664,9],[669,24],[673,36],[677,45],[680,50],[684,60],[688,65],[692,64],[697,53],[701,47],[705,54],
	[709,62],[713,63],[720,64],[724,61],[728,44],[732,29],[736,17],[740,13],[744,20],[748,28],[752,43],[757,48],[760,48],[764,57],[768,60],
	[772,58],[777,55],[781,54],[785,50],[788,56],[792,62],[797,64],[800,57],[804,63],[808,61],[812,53],[817,34],[820,28],[824,39],[829,47],
	[832,46],[837,58],[840,58],[844,49],[848,36],[852,24],[857,19],[860,9],[864,18],[868,33],[872,48],[877,57],[880,65],[884,61],[888,64],
	[892,70],[896,72],[900,69],[904,67],[908,65],[912,61],[916,54],[921,44],[925,37],[929,28],[933,17],[937,15],[940,13],[944,12],[948,13],
	[952,16],[956,18],[960,13],[964,13],[968,17],[972,22]
];
// signal is the 3 bar average
let signal = MAIN.map((p, i) => {
	let part = MAIN.slice(Math.max(0, i - 2), i + 1);
	return [p[0], Math.round(part.reduce((s, q) => s + q[1], 0) / part.length)];
});
[16, 64].forEach(y => add('stoch', 'line', {x1: 0, x2: '100%', y1: y + .5, y2: y + .5, stroke: '#c0c0c0', 'stroke-dasharray': '3 3'}));
add('stoch', 'polyline', {points: signal.join(' '), fill: 'none', stroke: '#f00', 'stroke-dasharray': '3 4'});
add('stoch', 'polyline', {points: MAIN.join(' '), fill: 'none', stroke: '#20b2aa'});
add('stoch', 'text', {x: 4, y: 12}, 'Stoch(5,3,3) 72.7273 77.2280');
[[11, '100', 3], [21, '80', 2], [69, '20', 2], [78, '0', 3]].forEach(p =>
	add('stoch_scale', 'text', {x: p[2], y: p[0]}, p[1]));

// time scale
['9 Feb 2022', '9 Feb 16:45', '9 Feb 20:45', '10 Feb 00:45', '10 Feb 04:45', '10 Feb 08:45', '10 Feb 12:45', '10 Feb 16:45',
	'10 Feb 20:45', '11 Feb 00:45', '11 Feb 04:45', '11 Feb 08:45', '11 Feb 12:45', '11 Feb 16:45', '11 Feb 20:45', '14 Feb 00:45'].forEach((t, i) => {
	add('time_scale', 'rect', {x: 1 + i * 64, y: 0, width: 1, height: 3, fill: '#fff'});
	add('time_scale', 'text', {x: i * 64, y: 12}, t);
});
```
